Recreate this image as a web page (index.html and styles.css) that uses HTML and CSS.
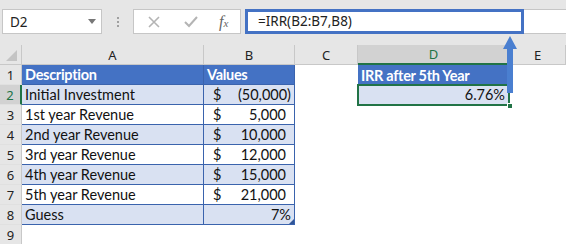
FILE: index.html
```html
<!DOCTYPE html>
<html lang="en">
<head>
    <meta charset="UTF-8">
    <meta name="viewport" content="width=device-width, initial-scale=1.0">
    <title>IRR</title>
    <link rel="stylesheet" href="styles.css">
</head>
<body>
    <div class="toolbar">
        <div class="name-box">
            <span>D2</span>
            <span class="caret"></span>
        </div>
        <div class="grip"><i></i><i></i><i></i></div>
        <div class="fx-buttons">
            <svg class="icon" width="14" height="14" viewBox="0 0 14 14">
                <path d="M2 2 L12 12 M12 2 L2 12" stroke="#b4b4b4" stroke-width="1.6" fill="none"/>
            </svg>
            <svg class="icon" width="16" height="14" viewBox="0 0 16 14">
                <path d="M2 7 L6 11 L14 2" stroke="#b4b4b4" stroke-width="2" fill="none"/>
            </svg>
            <span class="fx">f<small>x</small></span>
        </div>
        <div class="formula-bar">
            <div class="formula-focus">=IRR(B2:B7,B8)</div>
        </div>
    </div>

    <div class="sheet">
        <div class="corner"><span class="tri"></span></div>
        <div class="col-head">A</div>
        <div class="col-head">B</div>
        <div class="col-head">C</div>
        <div class="col-head active">D</div>
        <div class="col-head">E</div>

        <div class="row-head">1</div>
        <div class="cell t-head t-a">Description</div>
        <div class="cell t-head t-b">Values</div>
        <div class="cell"></div>
        <div class="cell t-head">IRR after 5th Year</div>
        <div class="cell"></div>

        <div class="row-head active">2</div>
        <div class="cell band t-a">Initial Investment</div>
        <div class="cell band t-b money"><span>$</span><span class="neg">(50,000)</span></div>
        <div class="cell"></div>
        <div class="cell band right selected">6.76%<span class="handle"></span></div>
        <div class="cell"></div>

        <div class="row-head">3</div>
        <div class="cell t-a">1st year Revenue</div>
        <div class="cell t-b money"><span>$</span><span class="pos">5,000</span></div>
        <div class="cell"></div>
        <div class="cell"></div>
        <div class="cell"></div>

        <div class="row-head">4</div>
        <div class="cell band t-a">2nd year Revenue</div>
        <div class="cell band t-b money"><span>$</span><span class="pos">10,000</span></div>
        <div class="cell"></div>
        <div class="cell"></div>
        <div class="cell"></div>

        <div class="row-head">5</div>
        <div class="cell t-a">3rd year Revenue</div>
        <div class="cell t-b money"><span>$</span><span class="pos">12,000</span></div>
        <div class="cell"></div>
        <div class="cell"></div>
        <div class="cell"></div>

        <div class="row-head">6</div>
        <div class="cell band t-a">4th year Revenue</div>
        <div class="cell band t-b money"><span>$</span><span class="pos">15,000</span></div>
        <div class="cell"></div>
        <div class="cell"></div>
        <div class="cell"></div>

        <div class="row-head">7</div>
        <div class="cell t-a">5th year Revenue</div>
        <div class="cell t-b money"><span>$</span><span class="pos">21,000</span></div>
        <div class="cell"></div>
        <div class="cell"></div>
        <div class="cell"></div>

        <div class="row-head">8</div>
        <div class="cell band t-a">Guess</div>
        <div class="cell band t-b right pct">7%<span class="resize"></span></div>
        <div class="cell"></div>
        <div class="cell"></div>
        <div class="cell"></div>

        <div class="row-head">9</div>
        <div class="cell"></div>
        <div class="cell"></div>
        <div class="cell"></div>
        <div class="cell"></div>
        <div class="cell"></div>
    </div>

    <svg class="arrow" width="16" height="58" viewBox="0 0 16 58">
        <path d="M8 0 L15 13 L11 13 L11 57 L5 57 L5 13 L1 13 Z" fill="#4a7fd0"/>
    </svg>
</body>
</html>
```

FILE: styles.css
```css
* {
    margin: 0;
    padding: 0;
    box-sizing: border-box;
}
body {
    width: 566px;
    height: 244px;
    overflow: hidden;
    background: #ffffff;
    font-family: "Noto Sans", sans-serif;
    position: relative;
}
.toolbar {
    height: 45px;
    background: #e6e6e6;
    display: flex;
    align-items: flex-start;
    padding-top: 9px;
    padding-left: 2px;
}
.name-box {
    width: 100px;
    height: 25px;
    background: white;
    border: 1px solid #c6c6c6;
    display: flex;
    align-items: center;
    justify-content: space-between;
    padding: 0 5px 0 7px;
    font-size: 13.5px;
    color: #222;
}
.caret {
    width: 0;
    height: 0;
    border-left: 4px solid transparent;
    border-right: 4px solid transparent;
    border-top: 5px solid #777;
}
.grip {
    width: 31px;
    height: 25px;
    display: flex;
    flex-direction: column;
    align-items: center;
    justify-content: center;
    gap: 2px;
}
.grip i {
    width: 2px;
    height: 2px;
    background: #a0a0a0;
}
.fx-buttons {
    width: 108px;
    height: 25px;
    background: white;
    border: 1px solid #c6c6c6;
    display: flex;
    align-items: center;
    padding-left: 13px;
    gap: 22px;
}
.fx {
    font-family: "Liberation Serif", serif;
    font-style: italic;
    font-size: 16px;
    color: #666;
    margin-left: -2px;
}
.fx small {
    font-size: 11px;
}
.formula-bar {
    flex: 1;
    height: 25px;
    margin-left: 4px;
    background: white;
    border-top: 1px solid #c6c6c6;
    border-bottom: 1px solid #c6c6c6;
    margin-right: -2px;
}
.formula-focus {
    width: 279px;
    height: 25px;
    margin-top: -1px;
    border: 3px solid #4472c4;
    font-size: 13.5px;
    color: #222;
    padding-left: 10px;
    line-height: 19px;
}
.sheet {
    display: grid;
    grid-template-columns: 22px 182px 91px 63px 152px 1fr;
    grid-auto-rows: 20px;
}
.corner,
.col-head,
.row-head {
    background: #e6e6e6;
    border-right: 1px solid #c8c8c8;
    border-bottom: 1px solid #c8c8c8;
    font-size: 13px;
    color: #222;
    display: flex;
    align-items: center;
    justify-content: center;
}
.corner {
    position: relative;
}
.tri {
    position: absolute;
    right: 4px;
    bottom: 3px;
    width: 0;
    height: 0;
    border-left: 11px solid transparent;
    border-bottom: 11px solid #c4c4c4;
}
.col-head.active {
    background: #d2d2d2;
    color: #217346;
    border-bottom: 2px solid #217346;
}
.row-head {
    border-bottom-color: #e0e0e0;
}
.row-head.active {
    background: #d2d2d2;
    color: #217346;
    border-right: 2px solid #217346;
}
.cell {
    font-family: Lato, "Liberation Sans", sans-serif;
    font-size: 14.5px;
    color: #111;
    display: flex;
    align-items: center;
    padding: 0 3px;
    white-space: nowrap;
    position: relative;
}
.t-a,
.t-b {
    border-bottom: 1px solid #3a63ad;
    border-right: 1px solid #3a63ad;
}
.t-head {
    background: #4472c4;
    color: white;
    font-weight: bold;
    letter-spacing: -0.3px;
}
.band {
    background: #d9e1f2;
}
.right {
    justify-content: flex-end;
}
.money {
    justify-content: space-between;
    padding-left: 9px;
}
.money .neg {
    padding-right: 0;
}
.money .pos {
    padding-right: 5px;
}
.pct {
    padding-right: 3px;
}
.resize {
    position: absolute;
    right: 0;
    bottom: 0;
    width: 0;
    height: 0;
    border-left: 5px solid transparent;
    border-bottom: 5px solid #2f5597;
}
.selected {
    padding-right: 5px;
    margin-top: -1px;
    height: 21px;
}
.selected::after {
    content: "";
    position: absolute;
    left: -1px;
    top: 0;
    right: 0;
    bottom: -1px;
    border: 2px solid #217346;
}
.handle {
    position: absolute;
    right: -3px;
    bottom: -4px;
    width: 6px;
    height: 6px;
    background: #217346;
    border: 1px solid white;
    z-index: 2;
}
.arrow {
    position: absolute;
    left: 502px;
    top: 36px;
}
```
